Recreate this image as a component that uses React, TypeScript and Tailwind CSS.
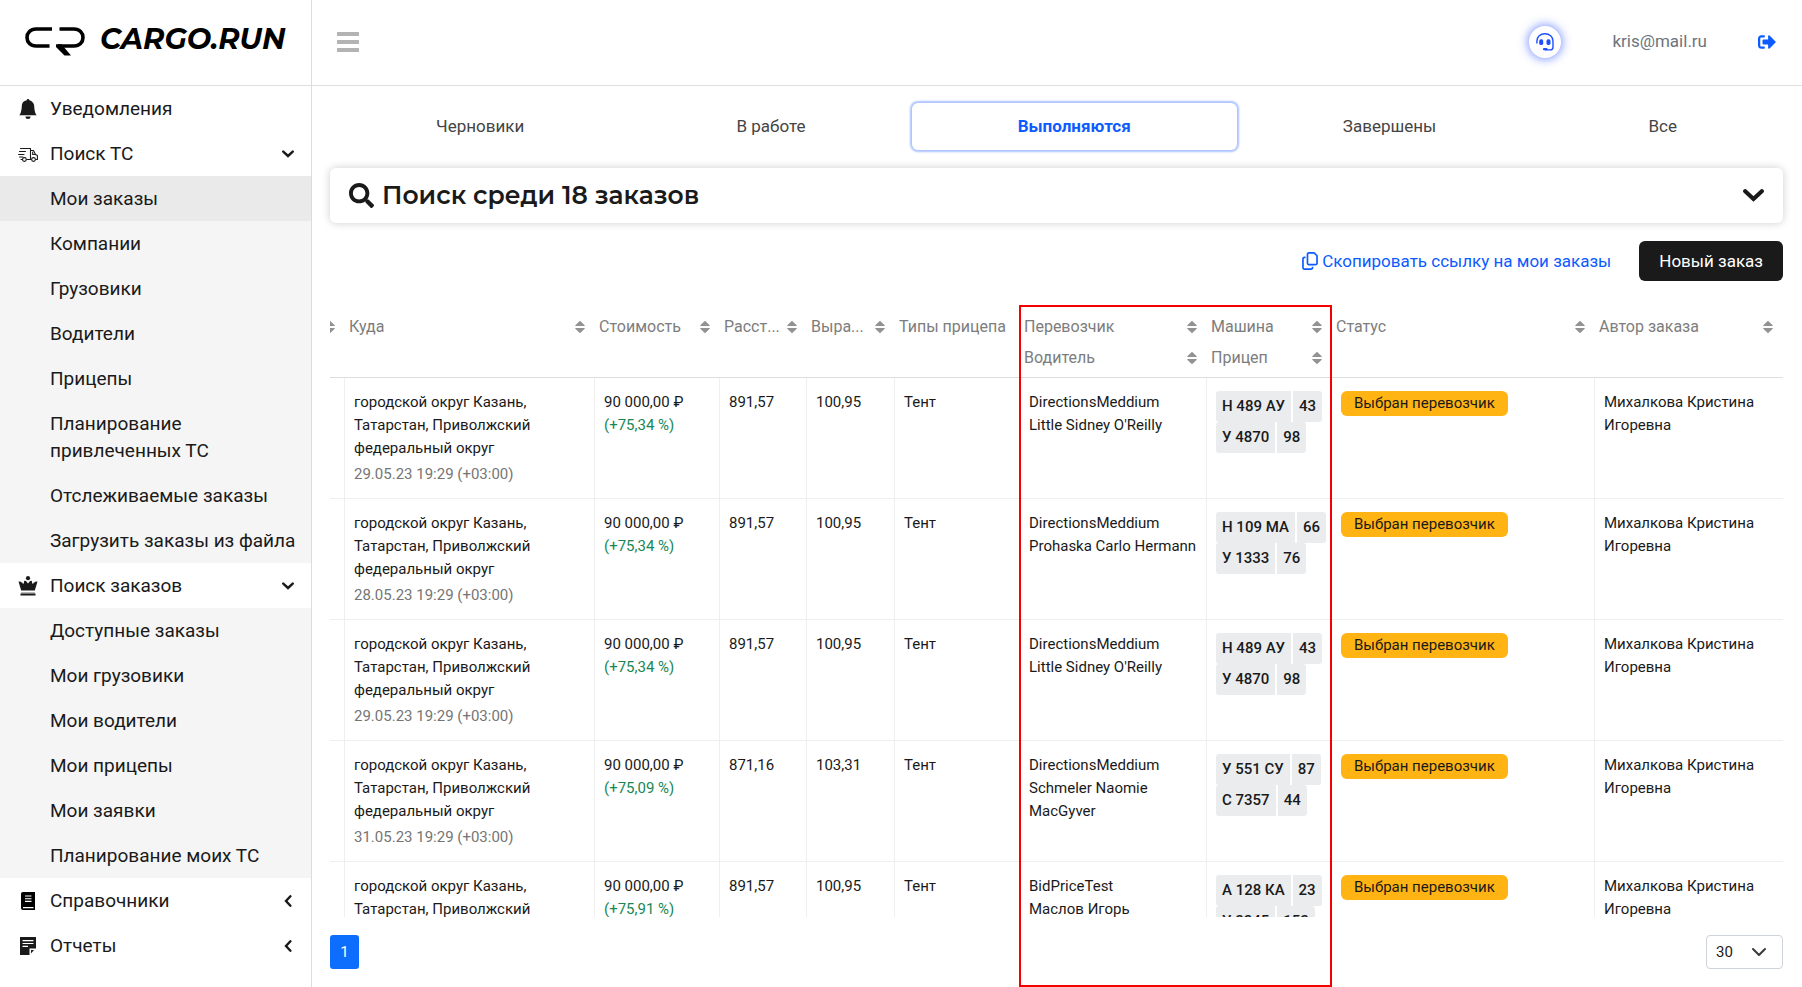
import { FaSearch, FaSignOutAlt } from "react-icons/fa";
import { FaRegCopy } from "react-icons/fa6";
import { BsBellFill } from "react-icons/bs";
import type { ReactNode } from "react";

function Logo() {
  return (
    <svg viewBox="0 0 60 30" className="h-[30px] w-[60px] shrink-0" fill="none" stroke="#000" strokeWidth="3.6" aria-hidden="true">
      <path d="M27 2H11C5.500 2 2 5.800 2 10.500S5.500 19 11 19H24.500" />
      <path d="M34.500 2H49C54.500 2 58 5.800 58 10.500S54.500 19 49 19H33" />
      <path d="M31 17.200H36.500L46 28.500H39.500L31 20Z" fill="#000" stroke="none" />
    </svg>
  );
}

function TruckIcon() {
  return (
    <svg viewBox="0 0 20 16" className="h-4 w-5" fill="none" stroke="#1a1a1a" strokeWidth="1.1" strokeLinecap="round" strokeLinejoin="round" aria-hidden="true">
      <path d="M2.500 2.500H12.500V12.500M12.500 4.500H15.500L17.500 8.500L19.400 9.500V13.500H17.800M1.500 5.500H7.500M.6 8.500H6M1.500 11H5M3 13.500H4.200M8.500 13.500H13.300" />
      <path d="M14.700 6V8.500H17.500" />
      <circle cx="6.400" cy="13.500" r="1.900" fill="#fff" />
      <circle cx="15.500" cy="13.500" r="1.900" fill="#fff" />
    </svg>
  );
}

function CrownIcon() {
  return (
    <svg viewBox="0 0 20 20" className="size-5" fill="#1a1a1a" aria-hidden="true">
      <circle cx="10" cy="2.200" r="2.100" />
      <path d="M.5 5.500L2.800 5.800L5.500 8L6.300 4.800L8 5L10 7.500L12 5L13.700 4.800L14.500 8L17.200 5.800L19.500 5.500L16.800 14.500H3.200Z" />
      <path d="M3 16H17V17.500H3Z" fill="#b8b8b8" />
      <path d="M2.500 17.500H17.500V19.500H2.500Z" />
    </svg>
  );
}

function BookIcon() {
  return (
    <svg viewBox="0 0 14 18" className="h-[18px] w-3.5" aria-hidden="true">
      <path d="M2 0H14V18H2C.8 18 0 17.200 0 16V2C0 .8 .8 0 2 0Z" fill="#000" />
      <path d="M4 4H10.500M4 6.700H10.500M4 9.400H10.500M2 15.600H12.500" stroke="#fff" strokeWidth="1.100" />
    </svg>
  );
}

function NoteIcon() {
  return (
    <svg viewBox="0 0 16 18" className="h-[18px] w-4" aria-hidden="true">
      <path d="M0 0H16V11.500H9.500V18H0Z" fill="#1a1a1a" />
      <path d="M11 13H14L11 16.500Z" fill="#1a1a1a" />
      <path d="M2.500 3.700H13.500M2.500 6.500H13.500M2.500 9.300H8" stroke="#fff" strokeWidth="1.200" />
    </svg>
  );
}

function HeadsetIcon() {
  return (
    <svg viewBox="0 0 18 18" className="size-[18px]" fill="none" stroke="#1d4fff" aria-hidden="true">
      <path d="M.9 10V8.200C.9 3.800 4.300 .8 8.900 .8S17 3.800 17 8.200V14.200C17 15.800 16.200 16.900 14.200 16.900H9.500" strokeWidth="1.400" strokeLinecap="round" />
      <path d="M8 16.200H10.500" strokeWidth="2.200" strokeLinecap="round" />
      <rect x="3.200" y="6.300" width="4" height="5.600" rx="1.600" fill="#1d4fff" stroke="none" />
      <rect x="10.500" y="6.300" width="4" height="5.600" rx="1.600" fill="#1d4fff" stroke="none" />
    </svg>
  );
}

function Chevron({ className }: { className: string }) {
  return (
    <svg viewBox="0 0 21 13" className={className} fill="none" stroke="#1a1a1a" strokeWidth="4.2" strokeLinecap="round" aria-hidden="true">
      <path d="M2.200 2.300L10.500 10L18.800 2.300" />
    </svg>
  );
}

function SortIcon() {
  return (
    <svg viewBox="0 0 10 14" className="h-3.5 w-2.5 shrink-0" fill="#929292" aria-hidden="true">
      <path d="M5 .8L9.700 5.200V6H.3V5.200Z" />
      <path d="M.3 8H9.700V8.800L5 13.200L.3 8.800Z" />
    </svg>
  );
}

function Group({ icon, label, open }: { icon: ReactNode; label: string; open?: boolean }) {
  return (
    <button type="button" className="flex w-full items-center py-[9px] pr-[17px] pl-[18px] text-left">
      <span className="flex w-5 justify-center">{icon}</span>
      <span className="flex-1 pl-3">{label}</span>
      {open === true && <Chevron className="h-2 w-3" />}
      {open === false && <Chevron className="h-2 w-3 rotate-90" />}
    </button>
  );
}

function SubMenu({ items, active }: { items: string[]; active?: string }) {
  return (
    <ul className="bg-[#f5f5f5]">
      {items.map((item) => (
        <li key={item}>
          <a href="#" className={item === active ? "block bg-[#eaeaea] py-[9px] pr-2 pl-[50px]" : "block py-[9px] pr-2 pl-[50px]"}>
            {item}
          </a>
        </li>
      ))}
    </ul>
  );
}

const searchItems = ["Мои заказы", "Компании", "Грузовики", "Водители", "Прицепы", "Планирование привлеченных ТС", "Отслеживаемые заказы", "Загрузить заказы из файла"];
const orderItems = ["Доступные заказы", "Мои грузовики", "Мои водители", "Мои прицепы", "Мои заявки", "Планирование моих ТС"];
const tabs = ["Черновики", "В работе", "Выполняются", "Завершены", "Все"];

const columns: { lines: string[]; sortable: boolean }[] = [
  { lines: [""], sortable: true },
  { lines: ["Куда"], sortable: true },
  { lines: ["Стоимость"], sortable: true },
  { lines: ["Расст..."], sortable: true },
  { lines: ["Выра..."], sortable: true },
  { lines: ["Типы прицепа"], sortable: false },
  { lines: ["Перевозчик", "Водитель"], sortable: true },
  { lines: ["Машина", "Прицеп"], sortable: true },
  { lines: ["Статус"], sortable: true },
  { lines: ["Автор заказа"], sortable: true },
];

type Order = { date: string; pct: string; dist: string; rate: string; carrier: string; driver: string; plates: [string, string][] };

const orders: Order[] = [
  { date: "29.05.23 19:29 (+03:00)", pct: "(+75,34 %)", dist: "891,57", rate: "100,95", carrier: "DirectionsMeddium", driver: "Little Sidney O'Reilly", plates: [["Н 489 АУ", "43"], ["У 4870", "98"]] },
  { date: "28.05.23 19:29 (+03:00)", pct: "(+75,34 %)", dist: "891,57", rate: "100,95", carrier: "DirectionsMeddium", driver: "Prohaska Carlo Hermann", plates: [["Н 109 МА", "66"], ["У 1333", "76"]] },
  { date: "29.05.23 19:29 (+03:00)", pct: "(+75,34 %)", dist: "891,57", rate: "100,95", carrier: "DirectionsMeddium", driver: "Little Sidney O'Reilly", plates: [["Н 489 АУ", "43"], ["У 4870", "98"]] },
  { date: "31.05.23 19:29 (+03:00)", pct: "(+75,09 %)", dist: "871,16", rate: "103,31", carrier: "DirectionsMeddium", driver: "Schmeler Naomie MacGyver", plates: [["У 551 СУ", "87"], ["С 7357", "44"]] },
  { date: "29.05.23 19:29 (+03:00)", pct: "(+75,91 %)", dist: "891,57", rate: "100,95", carrier: "BidPriceTest", driver: "Маслов Игорь", plates: [["А 128 КА", "23"], ["У 2245", "152"]] },
];

function Cell({ children }: { children?: ReactNode }) {
  return <td className="border-r border-[#efefef] px-[9px] pt-[13px] align-top last:border-r-0">{children}</td>;
}

function OrdersTable() {
  return (
    <table className="w-full table-fixed border-separate border-spacing-0 text-[15px] leading-[23px]">
      <colgroup>
        <col className="w-[15px]" />
        <col className="w-[250px]" />
        <col className="w-[125px]" />
        <col className="w-[87px]" />
        <col className="w-[88px]" />
        <col className="w-[125px]" />
        <col className="w-[187px]" />
        <col className="w-[125px]" />
        <col className="w-[263px]" />
        <col />
      </colgroup>
      <thead className="text-base leading-[31px] text-[#7d7d7d]">
        <tr>
          {columns.map((col, i) => (
            <th key={i} className="h-[67px] border-b border-[#dedede] pr-2.5 pl-1 text-left align-top font-normal">
              {col.lines.map((line) => (
                <div key={line} className="flex h-[31px] items-center justify-end">
                  {line && <span className="flex-1 whitespace-nowrap">{line}</span>}
                  {col.sortable && <SortIcon />}
                </div>
              ))}
            </th>
          ))}
        </tr>
      </thead>
      <tbody className="[&_td]:border-b">
        {orders.map((o, i) => (
          <tr key={i} className="h-[121px]">
            <Cell />
            <Cell>
              <p className="pr-10">городской округ Казань, Татарстан, Приволжский федеральный округ</p>
              <p className="pt-[3px] text-[#757575]">{o.date}</p>
            </Cell>
            <Cell>
              <p>90 000,00 ₽</p>
              <p className="text-[#198754]">{o.pct}</p>
            </Cell>
            <Cell>{o.dist}</Cell>
            <Cell>{o.rate}</Cell>
            <Cell>Тент</Cell>
            <Cell>
              <p>{o.carrier}</p>
              <p>{o.driver}</p>
            </Cell>
            <Cell>
              {o.plates.map(([num, region]) => (
                <div key={num} className="flex gap-0.5 font-medium whitespace-nowrap leading-[31px]">
                  <span className="rounded-l-[3px] bg-[#ebecee] px-1.5">{num}</span>
                  <span className="rounded-r-[3px] bg-[#ebecee] px-1.5">{region}</span>
                </div>
              ))}
            </Cell>
            <Cell>
              <span className="block w-fit rounded-md bg-[#ffb414] px-[13px] leading-[25px]">Выбран перевозчик</span>
            </Cell>
            <Cell>Михалкова Кристина Игоревна</Cell>
          </tr>
        ))}
      </tbody>
    </table>
  );
}

export default function App() {
  return (
    <div className="flex h-screen bg-white font-[Roboto,sans-serif] text-[17px] leading-[27px] text-[#1a1a1a]">
      <aside className="flex w-[312px] shrink-0 flex-col border-r border-[#dcdcdc] text-[19px]">
        <a href="#" className="flex h-[86px] shrink-0 items-start gap-[15px] border-b border-[#dedede] pt-[27px] pl-[25px] text-black">
          <Logo />
          <span className="font-[Montserrat,Inter,sans-serif] text-[29px] leading-6 font-bold italic">CARGO.RUN</span>
        </a>
        <nav>
          <Group icon={<BsBellFill className="size-5" />} label="Уведомления" />
          <Group icon={<TruckIcon />} label="Поиск ТС" open />
          <SubMenu items={searchItems} active="Мои заказы" />
          <Group icon={<CrownIcon />} label="Поиск заказов" open />
          <SubMenu items={orderItems} />
          <Group icon={<BookIcon />} label="Справочники" open={false} />
          <Group icon={<NoteIcon />} label="Отчеты" open={false} />
        </nav>
      </aside>

      <div className="flex min-w-0 flex-1 flex-col">
        <header className="flex h-[86px] shrink-0 items-center border-b border-[#dedede] pr-[26px] pb-0.5 pl-[25px]">
          <button type="button" aria-label="Меню" className="flex w-[22px] flex-col gap-1">
            <span className="h-1 bg-[#b3b3b3]" />
            <span className="h-1 bg-[#b3b3b3]" />
            <span className="h-1 bg-[#b3b3b3]" />
          </button>
          <button type="button" aria-label="Поддержка" className="ml-auto flex size-8 items-center justify-center rounded-full bg-white shadow-[0_0_8px_2px_rgba(40,80,255,0.5)]">
            <HeadsetIcon />
          </button>
          <span className="pl-[51px] text-[#6c757d]">kris@mail.ru</span>
          <a href="#" aria-label="Выйти" className="pl-[51px] text-[#0d5bff]">
            <FaSignOutAlt className="size-[18px]" />
          </a>
        </header>

        <main className="flex min-h-0 flex-1 flex-col pr-[19px] pl-[18px]">
          <div className="mt-[17px] flex h-[47px] shrink-0 text-[#444]">
            {tabs.map((tab) => (
              <button
                key={tab}
                type="button"
                className={tab === "Выполняются" ? "flex-auto rounded-md font-bold text-[#0d5bff] shadow-[0_0_2px_2px_#adc3ff]" : "flex-auto"}
              >
                {tab}
              </button>
            ))}
          </div>

          <button type="button" className="mt-[18px] flex h-[55px] shrink-0 items-center rounded-md px-[19px] shadow-[0_0_8px_rgba(0,0,0,0.2)]">
            <FaSearch className="size-[25px]" />
            <span className="flex-1 pl-2 text-left font-[Montserrat,Inter,sans-serif] text-[25px] font-semibold">Поиск среди 18 заказов</span>
            <Chevron className="h-[13px] w-[21px]" />
          </button>

          <div className="mt-[18px] flex shrink-0 items-center justify-end gap-7">
            <a href="#" className="flex items-center gap-1 text-[#0d5bff]">
              <FaRegCopy className="h-[18px] w-4" />
              Скопировать ссылку на мои заказы
            </a>
            <button type="button" className="h-10 rounded-md bg-[#1a1a1a] px-5 text-white">
              Новый заказ
            </button>
          </div>

          <div className="relative flex min-h-0 flex-1 flex-col pt-6">
            <div className="min-h-0 flex-1 overflow-hidden pt-1.5">
              <OrdersTable />
            </div>
            <footer className="flex shrink-0 items-center justify-between py-[18px] text-[15px]">
              <button type="button" className="h-[34px] w-[29px] rounded-[3px] bg-[#0d6efd] text-white">
                1
              </button>
              <label className="relative flex items-center">
                <span className="sr-only">Строк на странице</span>
                <select className="h-[34px] w-[77px] appearance-none rounded-[4px] border border-[#ced4da] bg-white pl-[9px]">
                  <option>30</option>
                </select>
                <svg viewBox="0 0 16 16" className="pointer-events-none absolute right-4 size-4" fill="none" stroke="#343a40" strokeWidth="2" strokeLinecap="round" strokeLinejoin="round" aria-hidden="true">
                  <path d="M2 5l6 6 6-6" />
                </svg>
              </label>
            </footer>
            <div className="pointer-events-none absolute top-6 bottom-0 left-[689px] w-[313px] border-2 border-[#f40000]" />
          </div>
        </main>
      </div>
    </div>
  );
}
